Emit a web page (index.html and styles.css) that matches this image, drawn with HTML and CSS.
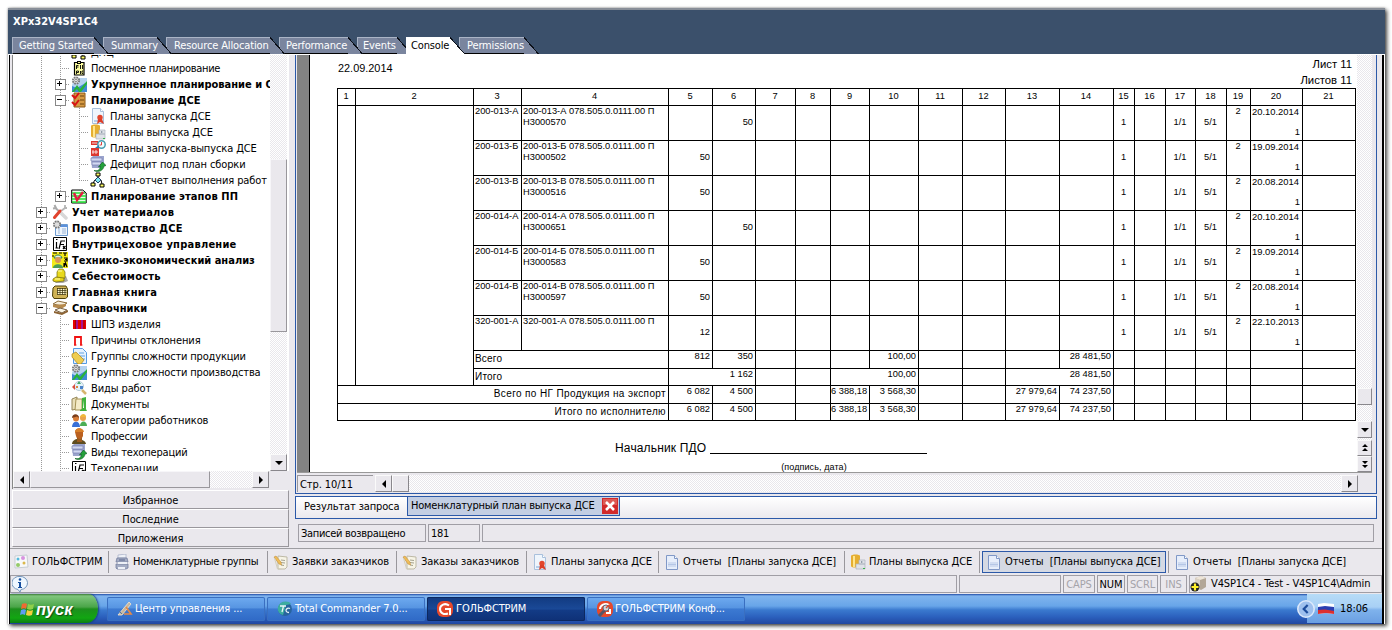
FILE: index.html
```html
<!DOCTYPE html>
<html lang="ru">
<head>
<meta charset="utf-8">
<title>XPx32V4SP1C4</title>
<link rel="stylesheet" href="styles.css">
</head>
<body>
<svg class="defs" width="0" height="0">
  <symbol id="shift" viewBox="0 0 16 16"><path d="M3.500 2.500h9.500v12.500h-9.500z" fill="#ffffa0" stroke="#000" stroke-width="1.200"/><path d="M6 1h4v3H6z" fill="#000"/><path d="M7 2h2v1H7z" fill="#ff9"/><path d="M5.500 9V5.500h2M5.500 7h2M9.500 5v4M11.500 5v4M5.500 14v-3h2v1.500h-2M9.500 11v3M12 11h-1v2.500h1" fill="none" stroke="#000" stroke-width=".9"/></symbol>
  <symbol id="gearchart" viewBox="0 0 16 16"><path d="M4 2h12v14H1V9z" fill="#b4d2f0"/><path d="M1 10l5 2 10-6v10H1z" fill="#3f8bd5"/><path d="M1 16l5-7 3 4 7-8v3l-6 8H8l-2-3-3 3z" fill="#28b339"/><circle cx="5" cy="4.500" r="3.200" fill="#ddd" stroke="#777" stroke-width="1.800" stroke-dasharray="1.700 .8"/><circle cx="5" cy="4.500" r="1.200" fill="#fff" stroke="#888"/></symbol>
  <symbol id="checks" viewBox="0 0 16 16"><path d="M3 1h11v14H3z" fill="#d69a43" stroke="#8b5818"/><path d="M9 4h4M9 8h4M9 12h4" stroke="#6d430f"/><path d="M1 3l3 3 4-5M1 10l3 3 4-5" fill="none" stroke="#d91414" stroke-width="2"/></symbol>
  <symbol id="docred" viewBox="0 0 16 16"><path d="M2.500.500h8l3 3v12h-11z" fill="#eff5fc" stroke="#a9c0dc"/><path d="M10.500.500v3h3" fill="#fff" stroke="#a9c0dc"/><path d="M4 12h4v2H4z" fill="#b5cdea"/><circle cx="10" cy="9.500" r="2.700" fill="#e2452c"/><path d="M8 11l-1 5 3-2 4 2-2-5z" fill="#dc3e28"/></symbol>
  <symbol id="barrel" viewBox="0 0 16 16"><path d="M1 2c0-2 9-2 9 0v10c0 2-9 2-9 0z" fill="#e5ae31"/><path d="M3 2h2v11H3z" fill="#ffe58c"/><path d="M9 6h6v4H9zM6 10h9v5H6z" fill="#dfe2e7" stroke="#adb3bf" stroke-width=".7"/><path d="M13 14h2v1h-2z" fill="#37b54a"/><path d="M11 7l2 1-2 1z" fill="#7b8798"/></symbol>
  <symbol id="redclock" viewBox="0 0 16 16"><path d="M1 1h7v4H1zM1 8h8v8H1z" fill="#dc3830"/><path d="M2 3h5M3 10v4M6 10v4M2 12h6" stroke="#fff" stroke-width=".8"/><circle cx="11.500" cy="4.500" r="3.700" fill="#eff" stroke="#4a9bb0" stroke-width="1.500"/><path d="M11.500 2v3h-2" fill="none" stroke="#e04040"/><path d="M5 8l4-3v3z" fill="#2a7dac"/></symbol>
  <symbol id="server" viewBox="0 0 16 16"><path d="M1 2l2-2h11v9l-3 3H2z" fill="#9ba4cd"/><path d="M1 2h11v3H1zM2 6h9v3H2z" fill="#d2d8f1" stroke="#7881b2" stroke-width=".7"/><path d="M4 14.500c4 1 6-1 6.500-4L8.500 11l4-5 3.500 3.500-2 .500c-.500 4-5 7-10 4.500z" fill="#24a13a" stroke="#106222" stroke-width=".7"/></symbol>
  <symbol id="flow" viewBox="0 0 16 16"><path d="M6 1h4v3H6zM1 11h4v3H1zM10 12h4v3h-4z" fill="#ff6" stroke="#000"/><path d="M8 4v3M5 8L3 11M11 8l1 4" stroke="#000" fill="none"/><path d="M8 5l3 3-3 3-3-3z" fill="#7de4ef" stroke="#246"/></symbol>
  <symbol id="check" viewBox="0 0 16 16"><path d="M.700 2h11l3.500 3v10H.700z" fill="#e8ffe8" stroke="#000"/><path d="M1 5h13M1 8h14M1 11h14M1 14h14" stroke="#21e333" stroke-width="1.500"/><path d="M3 5l3 7 6-8" fill="none" stroke="#e02040" stroke-width="2.500"/></symbol>
  <symbol id="tools" viewBox="0 0 16 16"><path d="M2.500 1l1.500 3L1 4.500M3.500 4L13 13" fill="none" stroke="#aaa" stroke-width="2"/><path d="M9 7l4-3V1M12 4h3" fill="none" stroke="#b5b5b5" stroke-width="1.800"/><path d="M9 9l5 5" stroke="#d8d8d8" stroke-width="3.500" stroke-linecap="round"/><path d="M2.500 13.500L8 7" stroke="#e1432e" stroke-width="3" stroke-linecap="round"/></symbol>
  <symbol id="gearlist" viewBox="0 0 16 16"><path d="M3.500 4.500h12v11h-12z" fill="#eef5fd" stroke="#6c9bd2"/><path d="M8 5h7v2H8z" fill="#5c91dc"/><path d="M6 9h2M6 11h2M6 13h2M10 9h4M10 11h4M10 13h4" stroke="#9bb5d6"/><circle cx="5" cy="4.500" r="3.200" fill="#ddd" stroke="#777" stroke-width="1.800" stroke-dasharray="1.700 .8"/></symbol>
  <symbol id="fx" viewBox="0 0 16 16"><path d="M1.500 1.500h13v13h-13z" fill="#fff" stroke="#000"/><path d="M4 3.500h1.500M4.500 6v6M3.500 12H6M7 13l2-8h4M8 8.500h4M11 10l2.500 3M13.500 10L11 13" fill="none" stroke="#000" stroke-width="1.200"/></symbol>
  <symbol id="tea" viewBox="0 0 16 16"><path d="M0 0h16v16H0z" fill="#f4ea19"/><path d="M1 1h4M7 1h3M0 4h2M11 1h4M13 1v3M12 6h3v3h-3M13 7.500h2M12 15l1.500-4 1.500 4M12 11v4" fill="none" stroke="#000" stroke-width="1.200"/><path d="M2 6c1-4 7-4 8 0z" fill="#ddf1e5" stroke="#287b57"/><circle cx="6" cy="8" r="3" fill="#d99458"/><path d="M1 16c0-5 10-5 10 0z" fill="#4c9c57"/></symbol>
  <symbol id="cost" viewBox="0 0 16 16"><path d="M2 13l3-3 9-2 2 5-5 2H4z" fill="#aaa"/><path d="M5 4l2-3h4l2 3v6l-4 1-4-1z" fill="#e8d91c" stroke="#736b0e" stroke-width=".7"/><path d="M1 11l3-2 8 1v3l-8 1-3-1z" fill="#e8d415" stroke="#6a6210" stroke-width=".7"/><path d="M6 3h4M3 11h5" stroke="#fffbb0"/></symbol>
  <symbol id="book" viewBox="0 0 16 16"><path d="M1 4l2-2h11l1.500 3v8l-2 1.500H2L.500 12z" fill="#d0b354" stroke="#4f4208"/><path d="M5 4.500h9.500v6H5z" fill="#fffad0"/><path d="M5 4.500h9.500M5 6.500h9.500M5 8.500h9.500M5 10.500h9M5.500 4v6.500M8 4v6.500M10.500 4v6.500M13 4v6.500" stroke="#352b05" stroke-width=".7"/></symbol>
  <symbol id="books" viewBox="0 0 16 16"><path d="M1 4l5-3 9 2-5 3z" fill="#f6eedb" stroke="#8d6c39"/><path d="M1 5v2l8 2 5-3V4" fill="#b68a4d"/><path d="M3 10l5-2 7 2-5 3z" fill="#fbf6e6" stroke="#786045"/><path d="M2 11v2l8 2 6-3v-2l-6 3z" fill="#8c6333"/></symbol>
  <symbol id="bars" viewBox="0 0 16 16"><path d="M2 4h13v9H2z" fill="#e80000"/><path d="M6 4v9M11 4v9" stroke="#8d1bc4" stroke-width="1.500"/><path d="M4.500 4v9M13 4v9" stroke="#a90000"/></symbol>
  <symbol id="pi" viewBox="0 0 16 16"><path d="M4 13.500V5h6v8.500" fill="none" stroke="#f01010" stroke-width="1.800"/><path d="M3 13h2.500M9 13h2.500" stroke="#f01010"/></symbol>
  <symbol id="docgold" viewBox="0 0 16 16"><path d="M2.500.500h9l4 4v11h-13z" fill="#e5f2ff" stroke="#559be4"/><path d="M8 5h5M9 8h5M10 11h4" stroke="#62a3e2"/><path d="M1 6l4-2 8 8-3 4H7L1 9z" fill="#efcd51" stroke="#aa831a" stroke-width=".7"/></symbol>
  <symbol id="magnify" viewBox="0 0 16 16"><circle cx="8" cy="6" r="4.500" fill="#e4f3fb" stroke="#b8cbd6"/><path d="M6 4l2-3 2 3z" fill="#48a868"/><path d="M1 7l3-3v6z" fill="#d94f40"/><path d="M11 10l4 4" stroke="#d6b46d" stroke-width="2.500"/><path d="M9 6h3v3H9z" fill="#4c84ca"/><path d="M5 6h2v2H5z" fill="#d98b40"/></symbol>
  <symbol id="docs" viewBox="0 0 16 16"><path d="M1 3l5-2v12l-5 1z" fill="#e9dfb8" stroke="#958658"/><path d="M5 3h6v11H4z" fill="#f4ebc8" stroke="#a59255"/><path d="M9 14l2-1V2l4-1v12l1 2H9zM12 12h1V4z" fill="#41b13c"/></symbol>
  <symbol id="people" viewBox="0 0 16 16"><path d="M1 15c0-7 8-7 8 0z" fill="#3970d6"/><path d="M9 14c0-6 7-6 7 0z" fill="#4cae55"/><circle cx="5" cy="6.500" r="3" fill="#d97d38"/><circle cx="12" cy="6" r="3" fill="#eaa34c"/><path d="M1 6c0-5 7-5 7 0L6 4.500z" fill="#7b3d1a"/><path d="M9 5c1-4 6-4 6 0z" fill="#f0b83c"/></symbol>
  <symbol id="person" viewBox="0 0 16 16"><path d="M1 16c0-3 3-5 6-5s8 2 8 5z" fill="#5f4d20"/><path d="M4 4c0-5 8-5 8 0v4c-2 5-6 4-7 0z" fill="#bb6120"/><path d="M4 4c1-5 8-5 9 0z" fill="#d8802a"/><path d="M6 9c2 3 4 2 5 0v5H6z" fill="#9a5a1e"/></symbol>
  <symbol id="home" viewBox="0 0 16 16"><path d="M2 2l12-1 1 12-13 1z" fill="#f8f9fa" stroke="#c7cdd3"/><circle cx="5" cy="5" r="1.500" fill="#56b9dc"/><circle cx="10" cy="4" r="2" fill="#d893df"/><circle cx="5" cy="11" r="2" fill="#95ca69"/><circle cx="11" cy="9" r="1.500" fill="#dbb84c"/></symbol>
  <symbol id="groups" viewBox="0 0 16 16"><path d="M4 4V1l8-1v4z" fill="#eef1f7" stroke="#a4acc4" stroke-width=".7"/><path d="M3 4h10l1 4H2zM2 10h12v4l-2 1H3l-1-1z" fill="#a4acc4" stroke="#737e9f" stroke-width=".8"/><path d="M4 8h9v2H4zM4 13h7v2H4z" fill="#edf0f7"/><path d="M5 6h6" stroke="#5b678c"/></symbol>
  <symbol id="note" viewBox="0 0 16 16"><path d="M5 2l9 1v10l-2 2H5z" fill="#f7f4e6" stroke="#bdb9a5"/><path d="M8 6l4 .500M8 8.500l4 .500M8 11l3 .500" stroke="#a4a28f"/><path d="M1 3l2-1 5 6 .500 3-2.500-1z" fill="#f0bd58" stroke="#b98532" stroke-width=".5"/><path d="M1.500 4l3 11h4" fill="none" stroke="#d3cfbd"/></symbol>
  <symbol id="doc" viewBox="0 0 16 16"><path d="M2.500 1.500h8l3 3v11h-11z" fill="#e7eefb" stroke="#8098c7"/><path d="M10.500 1.500v3h3" fill="#fff" stroke="#8098c7"/><path d="M4 8h8v5H4z" fill="#b5c6e6"/><path d="M4 9h8M4 12h8" stroke="#eaf1fc"/></symbol>
  <symbol id="golf" viewBox="0 0 16 16"><rect width="16" height="16" rx="6" fill="#e6482b"/><path d="M12 4.500C8 1.500 3 4 3 8s4 6 8 4.500M8 8h5v6" fill="none" stroke="#fff" stroke-width="2"/></symbol>
  <symbol id="golfconf" viewBox="0 0 16 16"><rect width="16" height="16" rx="6" fill="#e6482b"/><path d="M12 4C8 1.500 3 4 3 8M9 12h4V8" fill="none" stroke="#fff" stroke-width="2"/><path d="M2 15l6-6" stroke="#556" stroke-width="3"/><circle cx="9" cy="7" r="3" fill="#cdd6dc" stroke="#667"/><path d="M9 7l3-3" stroke="#e6482b" stroke-width="1.500"/></symbol>
  <symbol id="cc" viewBox="0 0 16 16"><path d="M1 14L12 1l2 2-9 11z" fill="#c7b69c" stroke="#f2e4cf" stroke-width=".8"/><path d="M9 6l5 7H7" fill="none" stroke="#e58a46" stroke-width="1.700"/><path d="M2 10l3 3" stroke="#52749f"/></symbol>
  <symbol id="tc" viewBox="0 0 16 16"><circle cx="8" cy="8" r="7" fill="#27649e"/><path d="M1 6c2-6 10-7 13-3l-5 1-3 10c-4-1-6-4-5-8z" fill="#3cac9f"/><path d="M3 5h6M6.500 5L5 11M13 7.500c-4-2-6 4-1 4" fill="none" stroke="#e8f4f8" stroke-width="1.300"/></symbol>
  <symbol id="info" viewBox="0 0 16 16"><path d="M8 .500a7 6.500 0 0 1 1 13L8 16l-2-2.500A7 6.500 0 0 1 8 .500z" fill="#eff7ff" stroke="#7597bb"/><circle cx="8" cy="3.500" r="1.300" fill="#164fa0"/><path d="M6 6h3v5h1v1H6v-1h1V7H6z" fill="#164fa0"/></symbol>
  <symbol id="db" viewBox="0 0 16 16"><path d="M5 2l6-2 5 2v9l-5 3-6-3z" fill="#b2a697"/><path d="M5 2l5 2v10l-5-3z" fill="#d9d0c3"/><path d="M5 2l6-2 5 2-6 2z" fill="#eee5d9"/><circle cx="5" cy="11" r="4.500" fill="#222"/><path d="M5 7.500v7M1.500 11h7" stroke="#fff02a" stroke-width="2.200"/></symbol>
  <symbol id="aleft" viewBox="0 0 8 8"><path d="M6 0v8L2 4z"/></symbol>
  <symbol id="aright" viewBox="0 0 8 8"><path d="M2 0v8l4-4z"/></symbol>
  <symbol id="adown" viewBox="0 0 8 8"><path d="M0 2h8L4 6z"/></symbol>
  <symbol id="adup" viewBox="0 0 8 8"><path d="M4 0l3 3H1zM4 4l3 3H1z"/></symbol>
  <symbol id="addown" viewBox="0 0 8 8"><path d="M1 1h6L4 4zM1 5h6L4 8z"/></symbol>
</svg>

<div class="window">
  <header class="top">
    <h1>XPx32V4SP1C4</h1>
    <nav class="tabs">
      <span class="tab t1">Getting Started</span><span class="tab t2">Summary</span><span class="tab t3">Resource Allocation</span><span class="tab t4">Performance</span><span class="tab t5">Events</span><span class="tab t6 on">Console</span><span class="tab t7">Permissions</span>
    </nav>
  </header>

  <div class="console">
    <div class="main">
      <aside class="side">
        <div class="treebox">
          <div class="tree">
            <div class="rows">
              <div class="row"><i class="v"></i><i class="v h"></i><svg><use href="#flow"/></svg><span>ДПЦ</span></div>
              <div class="row nr"><i class="v"></i><i class="v h"></i><svg><use href="#shift"/></svg><span>Посменное планирование</span></div>
              <div class="row b"><i class="v"></i><i class="v h x p"></i><svg><use href="#gearchart"/></svg><span>Укрупненное планирование и ОП</span></div>
              <div class="row b"><i class="v"></i><i class="v h x"></i><svg><use href="#checks"/></svg><span>Планирование ДСЕ</span></div>
              <div class="row"><i class="v"></i><i class="v"></i><i class="v h"></i><svg><use href="#docred"/></svg><span>Планы запуска ДСЕ</span></div>
              <div class="row"><i class="v"></i><i class="v"></i><i class="v h"></i><svg><use href="#barrel"/></svg><span>Планы выпуска ДСЕ</span></div>
              <div class="row"><i class="v"></i><i class="v"></i><i class="v h"></i><svg><use href="#redclock"/></svg><span>Планы запуска-выпуска ДСЕ</span></div>
              <div class="row"><i class="v"></i><i class="v"></i><i class="v h"></i><svg><use href="#server"/></svg><span>Дефицит под план сборки</span></div>
              <div class="row"><i class="v"></i><i class="v"></i><i class="v h end"></i><svg><use href="#flow"/></svg><span>План-отчет выполнения работ</span></div>
              <div class="row b w"><i class="v"></i><i class="v h x p end"></i><svg><use href="#check"/></svg><span>Планирование этапов ПП</span></div>
              <div class="row b ww"><i class="v h x p"></i><svg><use href="#tools"/></svg><span>Учет материалов</span></div>
              <div class="row b ww"><i class="v h x p"></i><svg><use href="#gearlist"/></svg><span>Производство ДСЕ</span></div>
              <div class="row b ww"><i class="v h x p"></i><svg><use href="#fx"/></svg><span>Внутрицеховое управление</span></div>
              <div class="row b"><i class="v h x p"></i><svg><use href="#tea"/></svg><span>Технико-экономический анализ</span></div>
              <div class="row b ww"><i class="v h x p"></i><svg><use href="#cost"/></svg><span>Себестоимость</span></div>
              <div class="row b ww"><i class="v h x p"></i><svg><use href="#book"/></svg><span>Главная книга</span></div>
              <div class="row b"><i class="v h x"></i><svg><use href="#books"/></svg><span>Справочники</span></div>
              <div class="row"><i class="v"></i><i class="v h"></i><svg><use href="#bars"/></svg><span>ШПЗ изделия</span></div>
              <div class="row"><i class="v"></i><i class="v h"></i><svg><use href="#pi"/></svg><span>Причины отклонения</span></div>
              <div class="row m"><i class="v"></i><i class="v h"></i><svg><use href="#docgold"/></svg><span>Группы сложности продукции</span></div>
              <div class="row m"><i class="v"></i><i class="v h"></i><svg><use href="#gearchart"/></svg><span>Группы сложности производства</span></div>
              <div class="row"><i class="v"></i><i class="v h"></i><svg><use href="#magnify"/></svg><span>Виды работ</span></div>
              <div class="row"><i class="v"></i><i class="v h"></i><svg><use href="#docs"/></svg><span>Документы</span></div>
              <div class="row"><i class="v"></i><i class="v h"></i><svg><use href="#people"/></svg><span>Категории работников</span></div>
              <div class="row m"><i class="v"></i><i class="v h"></i><svg><use href="#person"/></svg><span>Профессии</span></div>
              <div class="row m"><i class="v"></i><i class="v h"></i><svg><use href="#server"/></svg><span>Виды техопераций</span></div>
              <div class="row"><i class="v"></i><i class="v h"></i><svg><use href="#fx"/></svg><span>Техоперации</span></div>
            </div>
            <div class="vscroll dither"><div class="thumb"></div><div class="sbtn"><svg><use href="#adown"/></svg></div></div>
          </div>
          <div class="hscroll dither"><div class="sbtn"><svg><use href="#aleft"/></svg></div><div class="thumb"></div><div class="fill"></div><div class="sbtn"><svg><use href="#aright"/></svg></div><div class="corner"></div></div>
        </div>
        <div class="bar">Избранное</div>
        <div class="bar">Последние</div>
        <div class="bar">Приложения</div>
      </aside>

      <section class="right">
        <div class="viewer">
          <div class="view">
            <div class="gray"></div>
            <div class="page">
              <div class="phead"><span class="date">22.09.2014</span><span class="sheet">Лист 11<br>Листов 11</span></div>
              <table class="plan">
                <colgroup><col class="w18"><col class="w118"><col class="w48"><col class="w147"><col class="w44"><col class="w43"><col class="w40"><col class="w35"><col class="w39"><col class="w49"><col class="w44"><col class="w43"><col class="w54"><col class="w54"><col class="w21"><col class="w31"><col class="w30"><col class="w31"><col class="w24"><col class="w52"><col class="w53"></colgroup>
                <tr class="hd"><td>1</td><td>2</td><td>3</td><td>4</td><td>5</td><td>6</td><td>7</td><td>8</td><td>9</td><td>10</td><td>11</td><td>12</td><td>13</td><td>14</td><td>15</td><td>16</td><td>17</td><td>18</td><td>19</td><td>20</td><td>21</td></tr>
                <tr class="it"><td rowspan="9"></td><td rowspan="9"></td><td class="tl">200-013-А</td><td class="tl">200-013-А 078.505.0.0111.00 П<br>Н3000570</td><td></td><td class="r">50</td><td></td><td></td><td></td><td></td><td></td><td></td><td></td><td></td><td>1</td><td></td><td>1/1</td><td>5/1</td><td class="k">2</td><td class="d">20.10.2014<br><b>1</b></td><td></td></tr>
                <tr class="it"><td class="tl">200-013-Б</td><td class="tl">200-013-Б 078.505.0.0111.00 П<br>Н3000502</td><td class="r">50</td><td></td><td></td><td></td><td></td><td></td><td></td><td></td><td></td><td></td><td>1</td><td></td><td>1/1</td><td>5/1</td><td class="k">2</td><td class="d">19.09.2014<br><b>1</b></td><td></td></tr>
                <tr class="it"><td class="tl">200-013-В</td><td class="tl">200-013-В 078.505.0.0111.00 П<br>Н3000516</td><td class="r">50</td><td></td><td></td><td></td><td></td><td></td><td></td><td></td><td></td><td></td><td>1</td><td></td><td>1/1</td><td>5/1</td><td class="k">2</td><td class="d">20.08.2014<br><b>1</b></td><td></td></tr>
                <tr class="it"><td class="tl">200-014-А</td><td class="tl">200-014-А 078.505.0.0111.00 П<br>Н3000651</td><td></td><td class="r">50</td><td></td><td></td><td></td><td></td><td></td><td></td><td></td><td></td><td>1</td><td></td><td>1/1</td><td>5/1</td><td class="k">2</td><td class="d">20.10.2014<br><b>1</b></td><td></td></tr>
                <tr class="it"><td class="tl">200-014-Б</td><td class="tl">200-014-Б 078.505.0.0111.00 П<br>Н3000583</td><td class="r">50</td><td></td><td></td><td></td><td></td><td></td><td></td><td></td><td></td><td></td><td>1</td><td></td><td>1/1</td><td>5/1</td><td class="k">2</td><td class="d">19.09.2014<br><b>1</b></td><td></td></tr>
                <tr class="it"><td class="tl">200-014-В</td><td class="tl">200-014-В 078.505.0.0111.00 П<br>Н3000597</td><td class="r">50</td><td></td><td></td><td></td><td></td><td></td><td></td><td></td><td></td><td></td><td>1</td><td></td><td>1/1</td><td>5/1</td><td class="k">2</td><td class="d">20.08.2014<br><b>1</b></td><td></td></tr>
                <tr class="it"><td class="tl">320-001-А</td><td class="tl">320-001-А 078.505.0.0111.00 П</td><td class="r">12</td><td></td><td></td><td></td><td></td><td></td><td></td><td></td><td></td><td></td><td>1</td><td></td><td>1/1</td><td>5/1</td><td class="k">2</td><td class="d">22.10.2013<br><b>1</b></td><td></td></tr>
                <tr class="s18"><td class="n" colspan="2">Всего</td><td class="r">812</td><td class="r">350</td><td></td><td></td><td></td><td class="r">100,00</td><td></td><td></td><td></td><td class="r">28 481,50</td><td></td><td></td><td></td><td></td><td></td><td></td><td></td></tr>
                <tr class="s17"><td class="n" colspan="2">Итого</td><td class="r" colspan="2">1 162</td><td></td><td></td><td class="r" colspan="2">100,00</td><td></td><td></td><td class="r" colspan="2">28 481,50</td><td></td><td></td><td></td><td></td><td></td><td></td><td></td></tr>
                <tr class="s18"><td class="t" colspan="4">Всего по НГ Продукция на экспорт</td><td class="r">6 082</td><td class="r">4 500</td><td></td><td></td><td class="r">6 388,18</td><td class="r">3 568,30</td><td></td><td></td><td class="r">27 979,64</td><td class="r">74 237,50</td><td></td><td></td><td></td><td></td><td></td><td></td><td></td></tr>
                <tr class="s17"><td class="t" colspan="4">Итого по исполнителю</td><td class="r">6 082</td><td class="r">4 500</td><td></td><td></td><td class="r">6 388,18</td><td class="r">3 568,30</td><td></td><td></td><td class="r">27 979,64</td><td class="r">74 237,50</td><td></td><td></td><td></td><td></td><td></td><td></td><td></td></tr>
              </table>
              <div class="sign"><span>Начальник ПДО</span><i></i></div>
              <div class="hint">(подпись, дата)</div>
            </div>
            <div class="rscroll dither"><div class="sbtn thumb"></div><div class="gap"></div><div class="sbtn"><svg><use href="#adown"/></svg></div><div class="space"></div><div class="sbtn sm"><svg><use href="#adup"/></svg></div><div class="sbtn sm"><svg><use href="#addown"/></svg></div></div>
          </div>
          <div class="pager"><div class="pg">Стр. 10/11</div><div class="ps dither"><div class="sbtn"><svg><use href="#aleft"/></svg></div><div class="sbtn"></div><div class="fill"></div><div class="sbtn"><svg><use href="#aright"/></svg></div></div></div>
        </div>
        <div class="strip"><div class="st1">Результат запроса</div><div class="st2"><span>Номенклатурный план выпуска ДСЕ</span><svg class="close" viewBox="0 0 16 16"><rect width="16" height="16" fill="#d22a2a"/><path d="M1 1h14v6H1z" fill="#dd5b55"/><path d="M4 4l8 8M12 4l-8 8" stroke="#fff" stroke-width="2.600"/></svg></div></div>
        <div class="fields"><div class="f1">Записей возвращено</div><div class="f2">181</div><div class="f3"></div></div>
      </section>
    </div>

    <div class="wins">
      <div class="win n1"><svg><use href="#home"/></svg><span>ГОЛЬФСТРИМ</span></div>
      <div class="win n2"><svg><use href="#groups"/></svg><span>Номенклатурные группы</span></div>
      <div class="win n3"><svg><use href="#note"/></svg><span>Заявки заказчиков</span></div>
      <div class="win n4"><svg><use href="#note"/></svg><span>Заказы заказчиков</span></div>
      <div class="win n5"><svg><use href="#docred"/></svg><span>Планы запуска ДСЕ</span></div>
      <div class="win n6"><svg><use href="#doc"/></svg><span>Отчеты&nbsp; [Планы запуска ДСЕ]</span></div>
      <div class="win n7"><svg><use href="#barrel"/></svg><span>Планы выпуска ДСЕ</span></div>
      <div class="win n8"><svg><use href="#doc"/></svg><span>Отчеты&nbsp; [Планы выпуска ДСЕ]</span></div>
      <div class="win n9"><svg><use href="#doc"/></svg><span>Отчеты&nbsp; [Планы запуска ДСЕ]</span></div>
    </div>
    <div class="status">
      <div class="c1"><svg><use href="#info"/></svg></div><div class="c2"></div><div class="c3 off">CAPS</div><div class="c4">NUM</div><div class="c5 off">SCRL</div><div class="c6 off">INS</div><div class="c7"><svg><use href="#db"/></svg><span>V4SP1C4 - Test - V4SP1C4\Admin</span></div>
    </div>
    <div class="taskbar">
      <div class="start"><svg viewBox="0 0 16 16"><path d="M2 3c2-1 4-1 5 0L6 8C5 7 3 7 1 8z" fill="#ef6a32"/><path d="M8 3c2 1 4 1 6 0l-1 5c-2 1-4 1-6 0z" fill="#8fd04a"/><path d="M1 9c2-1 4-1 5 0l-1 5c-2-1-3-1-5 0z" fill="#5f9df0"/><path d="M7 9c2 1 4 1 6 0l-1 5c-2 1-4 1-6 0z" fill="#f5cf3c"/></svg><b>пуск</b></div>
      <div class="task"><svg><use href="#cc"/></svg><span>Центр управления ...</span></div>
      <div class="task"><svg><use href="#tc"/></svg><span>Total Commander 7.0...</span></div>
      <div class="task active"><svg><use href="#golf"/></svg><span>ГОЛЬФСТРИМ</span></div>
      <div class="task"><svg><use href="#golfconf"/></svg><span>ГОЛЬФСТРИМ Конф...</span></div>
      <div class="tray"><svg class="chev" viewBox="0 0 16 16"><circle cx="8" cy="8" r="7.300" fill="#9ec0ee" stroke="#dbe8fb" stroke-width="1.400"/><path d="M9.500 4.500L6 8l3.500 3.500" fill="none" stroke="#1d4c9c" stroke-width="2"/></svg><div class="clock"><svg class="flag" viewBox="0 0 16 12"><path d="M0 1l6-1 10 1v10l-8-1-8 1z" fill="#fff"/><path d="M0 4l7-1 9 1v4H0z" fill="#2b3fb2"/><path d="M0 7l7-.500L16 8v3l-8-1-8 1z" fill="#dd2f2f"/></svg><span>18:06</span></div></div>
    </div>
  </div>
</div>
</body>
</html>
```
FILE: styles.css
```css
* { box-sizing: border-box; }
body { margin: 0; padding: 8px 0 0 8px; width: 1392px; height: 630px; overflow: hidden; background: #fff; color: #000; font: 11px/16px "DejaVu Sans Condensed", "DejaVu Sans", sans-serif; font-stretch: condensed; white-space: nowrap; letter-spacing: -.09px; }
.defs { position: absolute; }
svg { width: 16px; height: 16px; flex: none; display: block; }
.dither { background: repeating-conic-gradient(#fff 0 25%, #e9e7ec 0 50%) 0 0 / 2px 2px; }

.window { width: 1377px; height: 616px; display: flex; flex-direction: column; box-shadow: 2px 2px 4px #444, 0 0 2px #999; }
.top { height: 46px; flex: none; background: #3b506b; border-top: 2px solid #888e98; display: flex; flex-direction: column; justify-content: space-between; }
h1 { margin: 3px 0 0 5px; font-size: 11px; line-height: 17px; font-weight: bold; color: #fff; letter-spacing: 0; }
.tabs { display: flex; padding-left: 4px; height: 17px; }
.tab { position: relative; height: 17px; margin-right: 9px; padding-left: 6px; line-height: 16px; background: #7a859e; color: #fff; border-top: 1px solid #aab4c6; border-left: 1px solid #aab4c6; border-bottom: 1px solid #000; letter-spacing: -.14px; }
/* slanted right edge, painted under the label */
.tab::after { content: ""; position: absolute; z-index: -1; left: 100%; top: -1px; width: 15px; height: 17px; background: linear-gradient(to bottom left, transparent 49%, #0c1018 49% 54%, #7a859e 54%); }
.tab.on { background: #fff; color: #000; border-color: #fff; }
.tab.on::after { background: linear-gradient(to bottom left, transparent 49%, #0c1018 49% 53%, #fff 53%); }
.t1 { width: 82px; z-index: 7; } .t2 { width: 54px; z-index: 6; padding-left: 7px; } .t3 { width: 104px; z-index: 5; padding-left: 7px; } .t4 { width: 69px; z-index: 4; } .t5 { width: 40px; z-index: 3; padding-left: 5px; } .t6 { width: 44px; padding-left: 4px; z-index: 8; } .t7 { width: 65px; z-index: 1; padding-left: 7px; }

.console { flex: 1; margin: 1px 1px 0 1px; width: 1375px; display: flex; flex-direction: column; background: #eae8ed; border-left: 1px solid #000; border-right: 2px solid #000; }
.main { height: 494px; display: flex; border-bottom: 1px solid #9d9da1; padding-left: 2px; }

.side { width: 277px; margin-right: 6px; }
.treebox { height: 434px; border-left: 1px solid #888; }
.tree { height: 416px; display: flex; background: #fff; overflow: hidden; }
.rows { width: 257px; padding-left: 19px; margin-top: -11px; overflow: hidden; }
.row { height: 16px; display: flex; overflow: hidden; letter-spacing: -.11px; }
.row svg { margin: 0 4px 0 1px; }
.row span { line-height: 17px; }
.row.m { letter-spacing: -.17px; }
.row.nr { letter-spacing: -.3px; }
.b { font-weight: bold; }
.row.b { letter-spacing: 0; }
.row.w { letter-spacing: .1px; }
.row.ww { letter-spacing: .24px; }
.row i { width: 19px; height: 16px; flex: none; display: grid; place-items: center; background: repeating-linear-gradient(#999 0 1px, transparent 1px 2px) 9px 0 / 1px 16px no-repeat; }
.row i.h { background: repeating-linear-gradient(#999 0 1px, transparent 1px 2px) 9px 0 / 1px 16px no-repeat, repeating-linear-gradient(to right, #999 0 1px, transparent 1px 2px) 9px 8px / 10px 1px no-repeat; }
.row i.end { background-size: 1px 8px, 10px 1px; }
.row i.x::before { content: ""; width: 9px; height: 9px; border: 1px solid #888; background: linear-gradient(#000, #000) 1px 3px / 5px 1px no-repeat, #fff; }
.row i.p::before { background: linear-gradient(#000, #000) 1px 3px / 5px 1px no-repeat, linear-gradient(#000, #000) 3px 1px / 1px 5px no-repeat, #fff; }
.vscroll { width: 17px; display: flex; flex-direction: column; justify-content: space-between; padding-top: 104px; }
.vscroll .thumb { height: 173px; background: #eae8ed; border: 1px solid #f7f6f9; border-right-color: #99979c; border-bottom-color: #99979c; }
.sbtn { width: 17px; height: 17px; flex: none; display: grid; place-items: center; background: #eae8ed; border: 1px solid #fafafa; border-right-color: #89878c; border-bottom-color: #89878c; }
.sbtn svg { width: 8px; height: 8px; }
.hscroll { display: flex; height: 17px; width: 274px; }
.hscroll .thumb { width: 180px; background: #eae8ed; border: 1px solid #f7f6f9; border-right-color: #99979c; border-bottom-color: #99979c; }
.fill { flex: 1; }
.corner { width: 18px; background: #eae8ed; }
.bar { height: 19px; border: 1px solid #fff; border-right-color: #99979c; border-bottom-color: #99979c; text-align: center; line-height: 19px; }
.treebox + .bar { margin-top: 1px; }

.right { width: 1082px; display: flex; flex-direction: column; }
.viewer { height: 439px; border: 1px solid #2c59a8; border-top: 0; padding: 0 4px 0 1px; width: 1082px; }
.view { height: 417px; display: flex; background: #fff; }
.gray { width: 12px; background: #838383; }
.page { width: 1048px; border-left: 1px solid #000; padding-left: 27px; font-family: "Liberation Sans", Arial, sans-serif; overflow: hidden; letter-spacing: 0; }
.phead { height: 33px; width: 1015px; display: flex; justify-content: space-between; font-size: 11.300px; }
.date { padding: 5px 0 0 1px; font-size: 10.900px; }
.sheet { text-align: right; line-height: 16px; padding-top: 1px; }
.plan { table-layout: fixed; width: 1019px; border-collapse: separate; border-spacing: 0; border-left: 1px solid #000; border-top: 1px solid #000; font-size: 9.300px; line-height: 11px; }
.plan td { padding: 0 1px 2px 0; border-right: 1px solid #000; border-bottom: 1px solid #000; text-align: center; vertical-align: middle; }
.hd { height: 17px; } .it { height: 35px; } .s18 { height: 18px; } .s17 { height: 17px; }
.plan .tl { text-align: left; vertical-align: top; padding: 0 0 0 1px; }
.plan .r { text-align: right; padding-right: 2px; }
.plan .s18 .r, .plan .s17 .r { vertical-align: top; padding-top: 0; }
.plan .k { vertical-align: top; padding-top: 0; }
.plan .d { vertical-align: top; text-align: left; padding: 0 2px 0 1px; font-size: 9.400px; }
.d b { display: block; font-weight: normal; text-align: right; padding-top: 9px; }
.plan .n { text-align: left; padding: 0 0 2px 1px; font-size: 10px; letter-spacing: .2px; }
.plan .t { text-align: right; padding: 0 2px 2px 0; font-size: 10px; letter-spacing: .37px; }
.w18 { width: 18px; } .w118 { width: 118px; } .w48 { width: 48px; } .w147 { width: 147px; } .w44 { width: 44px; } .w43 { width: 43px; } .w40 { width: 40px; } .w35 { width: 35px; } .w39 { width: 39px; } .w49 { width: 49px; } .w54 { width: 54px; } .w21 { width: 21px; } .w31 { width: 31px; } .w30 { width: 30px; } .w24 { width: 24px; } .w52 { width: 52px; } .w53 { width: 53px; }
.sign { display: flex; padding: 19px 0 0 278px; font-size: 12px; letter-spacing: .15px; }
.sign i { width: 217px; height: 14px; margin-left: 4px; border-bottom: 1px solid #000; }
.hint { width: 954px; text-align: center; font-size: 9px; line-height: 12px; padding-top: 5px; letter-spacing: .1px; }
.rscroll { width: 15px; padding-top: 333px; display: flex; flex-direction: column; }
.rscroll .sbtn { width: 15px; }
.rscroll .gap { height: 16px; }
.rscroll .space { height: 2px; }
.rscroll .sm { height: 16px; }
.pager { display: flex; height: 21px; border-top: 1px solid #999; padding-top: 2px; }
.pg { width: 76px; height: 17px; margin-right: 2px; line-height: 18px; padding-left: 2px; background: #eae8ed; border-top: 1px solid #99979c; border-left: 1px solid #99979c; }
.ps { width: 983px; height: 17px; display: flex; }
.strip { margin-top: 2px; height: 23px; display: flex; border: 1px solid #2c59a8; background: linear-gradient(#fff, #ebe9ee); }
.st1 { width: 111px; padding-left: 8px; line-height: 20px; letter-spacing: -.14px; }
.st2 { width: 213px; height: 19px; display: flex; align-items: center; justify-content: space-between; padding: 0 1px 0 3px; background: #c3cee3; border: solid #2c59a8; border-width: 0 1px 1px; letter-spacing: -.2px; }
.fields { display: flex; gap: 2px; padding: 5px 0 0 3px; line-height: 17px; letter-spacing: -.3px; }
.fields div { height: 18px; border: 1px solid #a09ea5; padding-left: 2px; }
.f1 { width: 128px; } .f2 { width: 52px; } .f3 { width: 892px; }

.wins { height: 26px; display: flex; }
.win { display: flex; align-items: center; height: 22px; margin: 2px 0 0; padding-left: 3px; border-right: 1px solid #99979c; }
.win span { margin-left: 3px; line-height: 18px; }
.n1 { width: 99px; } .n2 { width: 159px; padding-left: 5px; letter-spacing: -.29px; } .n3 { width: 129px; padding-left: 5px; } .n4 { width: 130px; padding-left: 5px; } .n5 { width: 132px; padding-left: 5px; }
.n6 { width: 186px; padding-left: 5px; } .n7 { width: 135px; padding-left: 5px; } .n8 { width: 184px; margin-left: 2px; border: 1px solid #2c59a8; background: #d5d9e3; } .n9 { margin-left: 2px; padding-left: 5px; border: 0; border-left: 1px solid #99979c; }
.status { height: 19px; display: flex; gap: 2px; }
.status > div { height: 18px; border: 1px solid #a09ea5; line-height: 17px; }
.c1 { width: 947px; padding-left: 1px; } .c2 { width: 102px; } .c3 { width: 32px; } .c4 { width: 28px; } .c5 { width: 31px; } .c6 { width: 27px; } .c7 { flex: 1; display: flex; }
.c3, .c4, .c5, .c6 { text-align: center; }
.c7 span { margin-left: 5px; line-height: 15px; letter-spacing: -.14px; }
.off { color: #a5a3a9; }
.taskbar { flex: 1; display: flex; align-items: flex-start; background: linear-gradient(#1f4ba5 0, #80b4ee 2px, #68a5e9 12px, #3a79cf 16px, #2b60bd 23px, #2147a1 100%); }
.start { width: 88px; height: 29px; margin-right: 9px; display: flex; align-items: center; padding-left: 10px; border-radius: 0 10px 12px 0 / 0 15px 15px 0; background: linear-gradient(#3b7b38 0, #7fc67c 2px, #4aa548 13px, #1d8f1d 15px, #12a612 24px, #0c7e12 100%); box-shadow: 1px 0 2px #153a7a; color: #fff; }
.start b { font: italic bold 16.500px/20px "Liberation Sans", sans-serif; text-shadow: 1px 1px 1px #124b12; }
.task { width: 158px; height: 24px; margin: 3px 2px 0 0; display: flex; align-items: center; padding-left: 10px; border-radius: 2px; color: #fff; background: linear-gradient(#6fabf0, #5795e2 45%, #3c7ad2 50%, #2f69c6); box-shadow: inset 0 0 0 1px #3a6fc0; letter-spacing: -.13px; }
.task span { margin-left: 2px; }
.task.active { background: linear-gradient(#123a80, #1a4997 50%, #133b86 55%, #0e3076); box-shadow: inset 0 0 0 1px #0d2860; }
.task.active span { margin-left: 3px; line-height: 18px; }
.tray { margin-left: auto; display: flex; align-items: center; height: 29px; }
.chev { margin-right: -8px; z-index: 1; width: 18px; height: 18px; }
.clock { height: 29px; width: 75px; display: flex; align-items: center; padding-left: 11px; background: linear-gradient(#b7dcf7, #a8d0f5 45%, #7fb2ec 55%, #6a9fe2); }
.flag { height: 12px; }
.clock span { margin-left: 6px; }
```
